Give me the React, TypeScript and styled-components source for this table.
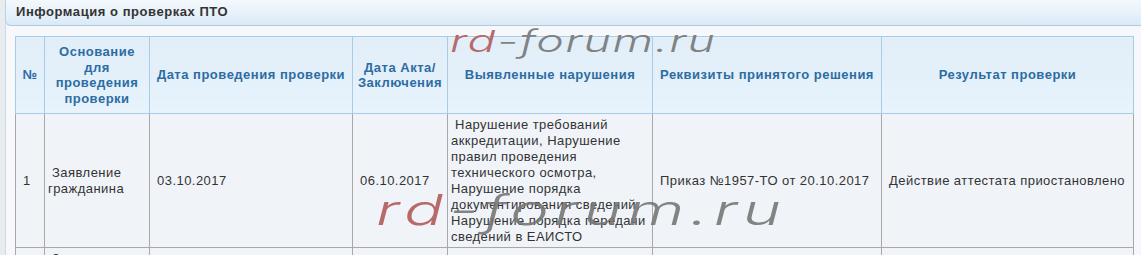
import { FC } from 'react';
import styled, { createGlobalStyle } from 'styled-components';

interface CheckRow {
  id: number;
  basis: string;
  checkDate: string;
  actDate: string;
  violations: string;
  decision: string;
  result: string;
}

const NB = '\u00a0';

const rows: CheckRow[] = [
  {
    id: 1,
    basis: 'Заявление гражданина',
    checkDate: '03.10.2017',
    actDate: '06.10.2017',
    violations:
      'Нарушение требований аккредитации, Нарушение правил проведения технического осмотра, Нарушение порядка документирования сведений, Нарушение порядка передачи сведений в ЕАИСТО',
    decision: 'Приказ №1957-ТО от 20.10.2017',
    result: 'Действие аттестата приостановлено',
  },
  {
    id: 2,
    basis: 'Заявление гражданина, материалы проверки, обращение в территориальный орган',
    checkDate: '14.11.2017',
    actDate: '17.11.2017',
    violations: 'Нарушение порядка передачи сведений в ЕАИСТО',
    decision: 'Приказ №2140-ТО от 01.12.2017',
    result: 'Нарушения устранены',
  },
];

const colWidths = [29, 105, 203, 95, 205, 229, 252];

const App: FC = () => {
  return (
    <>
      <GlobalStyle />
      <Page>
        <Panel>
          <TitleBar>Информация о проверках ПТО</TitleBar>
          <Content>
            <Table>
              <colgroup>
                {colWidths.map((w, i) => (
                  <col key={i} style={{ width: w }} />
                ))}
              </colgroup>
              <thead>
                <tr>
                  <Th>№</Th>
                  <Th>
                    Основание
                    <br />
                    для
                    <br />
                    проведения
                    <br />
                    проверки
                  </Th>
                  <Th>Дата проведения проверки</Th>
                  <Th>
                    Дата Акта/
                    <br />
                    Заключения
                  </Th>
                  <Th>Выявленные нарушения</Th>
                  <Th>Реквизиты принятого решения</Th>
                  <Th>Результат проверки</Th>
                </tr>
              </thead>
              <tbody>
                {rows.map((row) => (
                  <tr key={row.id}>
                    <Td>{NB + row.id}</Td>
                    <Td $top={row.id === 2}>{NB + row.basis}</Td>
                    <Td>{NB + row.checkDate}</Td>
                    <Td>{NB + row.actDate}</Td>
                    <Td $tight>{NB + row.violations}</Td>
                    <Td>{NB + row.decision}</Td>
                    <Td>{NB + row.result}</Td>
                  </tr>
                ))}
              </tbody>
            </Table>
          </Content>
        </Panel>

        <Watermark $size={30} $spacing={1} style={{ left: 450, top: 23 }}>
          <Red>rd</Red>-forum.ru
        </Watermark>
        <Watermark $size={42} $spacing={3.6} style={{ left: 376, top: 185 }}>
          <Red>rd</Red>-forum.ru
        </Watermark>
      </Page>
    </>
  );
};

export default App;

const GlobalStyle = createGlobalStyle`
  html, body {
    margin: 0;
    padding: 0;
    background: #e8ecef;
    overflow: hidden;
  }
`;

const Page = styled.div`
  position: relative;
  display: flex;
  min-height: 100vh;
  padding-left: 5px;
  font-family: "Liberation Sans", Arial, sans-serif;
`;

const Panel = styled.div`
  flex: 1;
  display: flex;
  flex-direction: column;
  background: #f6f8fb;
  border-left: 1px solid #cddbe7;
`;

const TitleBar = styled.div`
  height: 25px;
  line-height: 24px;
  padding-left: 10px;
  font-size: 13px;
  font-weight: bold;
  letter-spacing: 0.55px;
  color: #333;
  background: linear-gradient(to bottom, #f3f8fc 0%, #e8f2fa 50%, #dbeaf6 100%);
  border-bottom: 1px solid #a9cbe4;
  border-bottom-left-radius: 6px;
  margin-left: -1px;
  border-left: 1px solid #b8d2e7;
`;

const Content = styled.div`
  padding: 10px 0 0 9px;
`;

const Table = styled.table`
  border-collapse: collapse;
  table-layout: fixed;
  width: 1118px;
`;

const Th = styled.th`
  padding: 7px 3px;
  border: 1px solid #a9cce6;
  background: linear-gradient(to bottom, #e2eff9 0%, #e3f0fa 50%, #e8f3fc 100%);
  color: #2c6ca3;
  font-size: 13px;
  font-weight: bold;
  letter-spacing: 0.5px;
  line-height: 15.5px;
  text-align: center;
  vertical-align: middle;
`;

const Td = styled.td<{ $top?: boolean; $tight?: boolean }>`
  padding: ${(p) => (p.$tight ? '3px 0 2px 3px' : '3px 3px 2px')};
  border: 1px solid #a8a8a8;
  background: #f0f4f9;
  color: #333;
  font-size: 13px;
  letter-spacing: 0.45px;
  line-height: 16px;
  text-align: left;
  vertical-align: ${(p) => (p.$top ? 'top' : 'middle')};
  word-wrap: break-word;
`;

const Watermark = styled.div<{ $size: number; $spacing: number }>`
  position: absolute;
  font-family: Inter, "DejaVu Sans", sans-serif;
  font-weight: 300;
  font-style: italic;
  font-size: ${(p) => p.$size}px;
  letter-spacing: ${(p) => p.$spacing}px;
  line-height: 1.2;
  color: #777;
  opacity: 0.9;
  white-space: nowrap;
  transform: scaleX(1.55);
  transform-origin: left top;
  pointer-events: none;
`;

const Red = styled.span`
  color: #b25c5c;
`;
